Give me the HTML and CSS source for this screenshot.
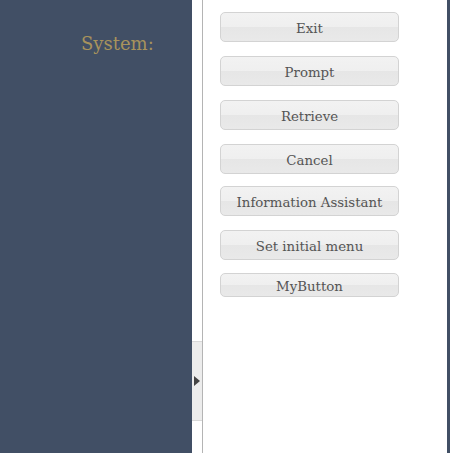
FILE: index.html
```html
<!DOCTYPE html>
<html>
<head>
    <meta charset="utf-8">
    <title>System Menu</title>
    <link rel="stylesheet" href="styles.css">
</head>
<body>
    <div id="layout">
        <div class="side">
            <div class="side-title">System:</div>
        </div>
        <div class="toggle-col">
            <div class="toggle-handle"><span class="toggle-arrow"></span></div>
        </div>
        <div class="menu">
            <div class="menu-btn">Exit</div>
            <div class="menu-btn">Prompt</div>
            <div class="menu-btn">Retrieve</div>
            <div class="menu-btn">Cancel</div>
            <div class="menu-btn tight">Information Assistant</div>
            <div class="menu-btn">Set initial menu</div>
            <div class="menu-btn small">MyButton</div>
        </div>
        <div class="edge"></div>
    </div>
</body>
</html>
```

FILE: styles.css
```css
body {
    margin: 0;
    font-family: 'DejaVu Serif', serif;
    height: 453px;
    overflow: hidden;
    background: #ffffff;
}

#layout {
    display: flex;
    height: 453px;
}

.side {
    width: 192px;
    background-color: #414f65;
    flex-shrink: 0;
}

.side-title {
    padding: 33px 0 0 81px;
    font-size: 18px;
    color: #a8935c;
}

.toggle-col {
    width: 10px;
    flex-shrink: 0;
    display: flex;
    flex-direction: column;
    padding-top: 341px;
}

.toggle-handle {
    height: 78px;
    background: #ececec;
    border-top: 1px solid #d8d8d8;
    border-bottom: 1px solid #d8d8d8;
    display: flex;
    align-items: center;
}

.toggle-arrow {
    width: 0;
    height: 0;
    margin-left: 2px;
    border-top: 5px solid transparent;
    border-bottom: 5px solid transparent;
    border-left: 6px solid #444444;
}

.menu {
    flex: 1;
    border-left: 1px solid #b4b4b4;
    padding: 12px 0 0 17px;
    display: flex;
    flex-direction: column;
}

.menu-btn {
    width: 177px;
    height: 28px;
    margin-bottom: 14px;
    border: 1px solid #d3d3d3;
    border-radius: 5px;
    background: linear-gradient(#f2f2f2 0%, #efefef 50%, #e6e6e6 50%, #e9e9e9 100%);
    color: #555555;
    font-size: 13.33px;
    line-height: 31px;
    text-align: center;
    overflow: hidden;
}

.menu-btn.tight {
    margin-top: -2px;
}

.menu-btn.small {
    margin-top: -1px;
    height: 22px;
    line-height: 25px;
}

.edge {
    width: 3px;
    background-color: #414f65;
    flex-shrink: 0;
}
```
